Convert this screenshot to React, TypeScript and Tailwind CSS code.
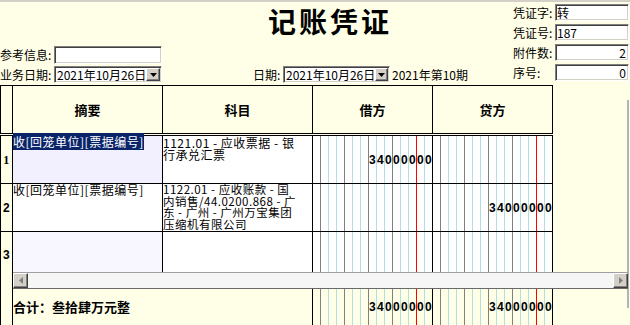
import React from "react";

// right border colour of each of the 15 amount cells (k = 1..15)
const lineColor = (k: number) =>
  k === 15
    ? "border-black"
    : k === 13
      ? "border-[#ff0000]"
      : k % 3 === 1
        ? "border-[#808080]"
        : "border-[#b0e0e6]";

function Field({
  className = "",
  children,
}: {
  className?: string;
  children?: React.ReactNode;
}) {
  return (
    <div
      className={`flex items-center p-[1px] bg-white border border-t-[#808080] border-l-[#808080] border-r-white border-b-white shadow-[inset_1px_1px_0_#404040,inset_-1px_-1px_0_#d4d0c8] ${className}`}
    >
      {children}
    </div>
  );
}

function DateSelect({ className = "", value }: { className?: string; value: string }) {
  return (
    <Field className={className}>
      <span className="flex-1 pl-[1px] leading-none whitespace-nowrap">{value}</span>
      <div className="w-[16px] h-[13px] bg-[#d4d0c8] border border-t-white border-l-white border-r-[#404040] border-b-[#404040] shadow-[inset_-1px_-1px_0_#808080] flex items-center justify-center">
        <svg width="7" height="4" viewBox="0 0 7 4">
          <path d="M0 0h7L3.5 4z" fill="#000" />
        </svg>
      </div>
    </Field>
  );
}

function Amount({ value, bg = "bg-white" }: { value?: string; bg?: string }) {
  const digits = (value ?? "").padStart(15, " ").split("");
  return (
    <div className={`flex w-[120px] h-full ${bg}`}>
      {digits.map((d, i) => (
        <div
          key={i}
          className={`w-[8px] h-full border-r flex items-center justify-center ${lineColor(i + 1)}`}
        >
          {d.trim() && (
            <span className="font-['Liberation_Sans',sans-serif] font-bold text-[12px] leading-none">
              {d}
            </span>
          )}
        </div>
      ))}
    </div>
  );
}

function ArrowButton({ dir }: { dir: "left" | "right" }) {
  return (
    <div className="w-[15px] h-full bg-[#d4d0c8] border border-t-white border-l-white border-r-[#404040] border-b-[#404040] shadow-[inset_-1px_-1px_0_#808080] flex items-center justify-center">
      <svg width="4" height="7" viewBox="0 0 4 7">
        {dir === "left" ? (
          <path d="M4 0v7L0 3.5z" fill="#808080" />
        ) : (
          <path d="M0 0v7l4-3.5z" fill="#808080" />
        )}
      </svg>
    </div>
  );
}

export default function App() {
  return (
    <div className="w-[630px] h-[325px] overflow-hidden bg-[#ffffe7] border-t-2 border-[#d4d0c8] text-black font-['Noto_Sans_CJK_SC',sans-serif]">
      {/* voucher header */}
      <div className="flex h-[83px]">
        <div className="w-[513px] flex flex-col text-[12px]">
          <div className="h-[44px] pl-[268px] pt-[4px] text-[28px] leading-[30px] font-bold tracking-[3px] whitespace-nowrap">
            记账凭证
          </div>
          <div className="flex items-center h-[18px]">
            <span className="w-[54px] whitespace-nowrap">参考信息:</span>
            <Field className="w-[108px] h-[18px]" />
          </div>
          <div className="flex items-center h-[17px] mt-[2px]">
            <span className="w-[54px] whitespace-nowrap">业务日期:</span>
            <DateSelect className="w-[108px] h-[17px]" value="2021年10月26日" />
            <span className="ml-[91px] w-[30px] whitespace-nowrap">日期:</span>
            <DateSelect className="w-[107px] h-[17px]" value="2021年10月26日" />
            <span className="ml-[2px] whitespace-nowrap">2021年第10期</span>
          </div>
        </div>
        <div className="w-[117px] flex flex-col gap-[3px] pt-[2px] text-[12px]">
          <div className="flex items-center h-[17px]">
            <span className="w-[42px] whitespace-nowrap">凭证字:</span>
            <Field className="w-[74px] h-[17px] leading-none">转</Field>
          </div>
          <div className="flex items-center h-[17px]">
            <span className="w-[42px] whitespace-nowrap">凭证号:</span>
            <Field className="w-[74px] h-[17px] leading-none">187</Field>
          </div>
          <div className="flex items-center h-[17px]">
            <span className="w-[42px] whitespace-nowrap">附件数:</span>
            <Field className="w-[74px] h-[17px] leading-none justify-end pr-[2px]">2</Field>
          </div>
          <div className="flex items-center h-[17px]">
            <span className="w-[42px] whitespace-nowrap">序号:</span>
            <Field className="w-[74px] h-[17px] leading-none justify-end pr-[2px]">0</Field>
          </div>
        </div>
      </div>

      {/* entries grid */}
      <div className="relative flex">
        <div className="w-[553px] flex flex-col">
          <div className="flex h-[49px] border-y border-l border-black text-[13px] font-bold">
            <div className="w-[12px] border-r border-black" />
            <div className="w-[150px] border-r border-black flex items-center justify-center">摘要</div>
            <div className="w-[150px] border-r border-black flex items-center justify-center">科目</div>
            <div className="w-[120px] border-r border-black flex items-center justify-center">借方</div>
            <div className="w-[120px] border-r border-black flex items-center justify-center">贷方</div>
          </div>

          <div className="mt-[1px] border-l border-black text-[12px] leading-[12px] tracking-[0.5px]">
            <div className="flex h-[49px] border-y border-black">
              <div className="w-[12px] border-r border-black flex items-center justify-center font-['Liberation_Serif',serif] font-bold">
                1
              </div>
              <div className="w-[150px] border-r border-black bg-[#f2f0ff]">
                <span className="bg-[#0a246a] text-white whitespace-nowrap">
                  收[回笼单位][票据编号]
                </span>
              </div>
              <div className="w-[150px] border-r border-black bg-white pt-[1px] whitespace-nowrap">
                <div>1121.01 - 应收票据 - 银</div>
                <div>行承兑汇票</div>
              </div>
              <Amount value="34000000" />
              <Amount />
            </div>

            <div className="flex h-[48px] border-b border-black">
              <div className="w-[12px] border-r border-black flex items-center justify-center font-['Liberation_Sans',sans-serif] font-bold">
                2
              </div>
              <div className="w-[150px] border-r border-black bg-white whitespace-nowrap">
                收[回笼单位][票据编号]
              </div>
              <div className="w-[150px] border-r border-black bg-white whitespace-nowrap text-[11.5px] leading-[11.5px] overflow-hidden">
                <div>1122.01 - 应收账款 - 国</div>
                <div>内销售/44.0200.868 - 广</div>
                <div>东 - 广州 - 广州万宝集团</div>
                <div>压缩机有限公司</div>
              </div>
              <Amount />
              <Amount value="34000000" />
            </div>

            <div className="flex h-[57px]">
              <div className="w-[12px] border-r border-black flex justify-center pt-[17px] font-['Liberation_Sans',sans-serif] font-bold">
                3
              </div>
              <div className="w-[150px] border-r border-black bg-[#f8f7ff]" />
              <div className="w-[150px] border-r border-black bg-white" />
              <Amount />
              <Amount />
            </div>

            <div className="flex h-[36px]">
              <div className="w-[12px] border-r border-black" />
              <div className="w-[300px] border-r border-black flex items-center text-[13px] tracking-normal font-bold whitespace-nowrap">
                合计：叁拾肆万元整
              </div>
              <Amount value="34000000" bg="bg-[#ffffe7]" />
              <Amount value="34000000" bg="bg-[#ffffe7]" />
            </div>
          </div>
        </div>

        <div className="flex-1 flex justify-end pr-[1px]">
          <div className="w-[2px] mt-[15px] h-[208px] bg-[#b4b4b4]" />
        </div>

        {/* horizontal scrollbar over the grid */}
        <div className="absolute left-[13px] top-[187px] w-[615px] h-[17px] flex bg-[#f6f6f6] border-t border-b border-t-[#a0a0a0] border-b-[#696969]">
          <ArrowButton dir="left" />
          <div className="flex-1" />
          <ArrowButton dir="right" />
        </div>
      </div>
    </div>
  );
}
